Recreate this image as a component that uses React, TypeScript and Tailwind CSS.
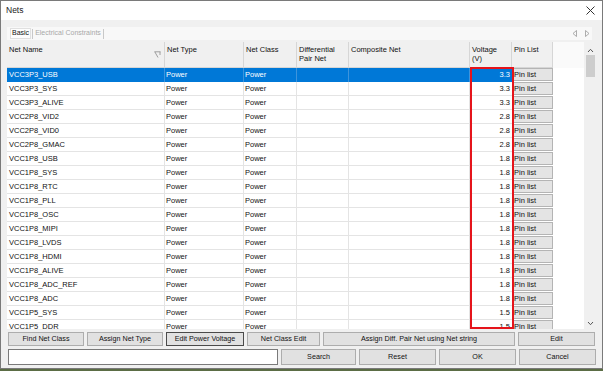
import React from "react";

const rows: [string, string][] = [
  ["VCC3P3_USB", "3.3"],
  ["VCC3P3_SYS", "3.3"],
  ["VCC3P3_ALIVE", "3.3"],
  ["VCC2P8_VID2", "2.8"],
  ["VCC2P8_VID0", "2.8"],
  ["VCC2P8_GMAC", "2.8"],
  ["VCC1P8_USB", "1.8"],
  ["VCC1P8_SYS", "1.8"],
  ["VCC1P8_RTC", "1.8"],
  ["VCC1P8_PLL", "1.8"],
  ["VCC1P8_OSC", "1.8"],
  ["VCC1P8_MIPI", "1.8"],
  ["VCC1P8_LVDS", "1.8"],
  ["VCC1P8_HDMI", "1.8"],
  ["VCC1P8_ALIVE", "1.8"],
  ["VCC1P8_ADC_REF", "1.8"],
  ["VCC1P8_ADC", "1.8"],
  ["VCC1P5_SYS", "1.5"],
  ["VCC1P5_DDR", "1.5"],
];

function Btn({ label, w, h, focus }: { label: string; w: string; h: string; focus?: boolean }) {
  return (
    <div
      className={`${w} ${h} flex items-center justify-center bg-[#e1e1e1] border ${
        focus ? "border-[#4a4a4a]" : "border-[#adadad]"
      } text-[7.2px] text-[#111]`}
    >
      {label}
    </div>
  );
}

export default function App() {
  return (
    <div className="w-[603px] h-[371px] bg-[#5b6d45] [font-family:'Liberation_Sans',Arial,sans-serif] overflow-hidden">
      <div className="w-[603px] h-[369px] border border-[#7a7a7a] bg-[#f0f0f0] flex flex-col relative">
        {/* title bar */}
        <div className="h-[19px] bg-white flex items-center justify-between pl-[5px] pr-[7px] shrink-0">
          <span className="text-[8.5px] text-[#222]">Nets</span>
          <svg width="9" height="9" viewBox="0 0 9 9">
            <path d="M0.5 0.5 L8.5 8.5 M8.5 0.5 L0.5 8.5" stroke="#333" strokeWidth="1" />
          </svg>
        </div>

        {/* tab strip */}
        <div className="mt-[7px] ml-[6px] mr-[10px] h-[13px] bg-[#f8f8f8] flex items-center text-[7px] shrink-0">
          <div className="ml-[3px] h-[11px] px-[1px] flex items-center bg-[#fdfdfd] border border-[#e0e0e0] text-[#111]">Basic</div>
          <div className="w-px h-[10px] bg-[#c8c8c8] ml-[1px]" />
          <div className="px-[2px] text-[#a8a8a8]">Electrical Constraints</div>
          <div className="w-px h-[10px] bg-[#c8c8c8]" />
          <div className="flex-1" />
          <svg width="6" height="7" viewBox="0 0 6 7" className="mr-[6px]">
            <path d="M4.5 0.5 L1 3.5 L4.5 6.5 Z" fill="none" stroke="#999" strokeWidth="0.8" />
          </svg>
          <svg width="6" height="7" viewBox="0 0 6 7" className="mr-[2px]">
            <path d="M1.5 0.5 L5 3.5 L1.5 6.5 Z" fill="none" stroke="#999" strokeWidth="0.8" />
          </svg>
        </div>

        {/* grid */}
        <div className="mt-[2px] ml-[6px] mr-[4px] h-[287px] flex shrink-0 relative">
          <div className="w-[577px] h-full bg-white overflow-hidden">
            {/* header */}
            <div className="flex h-[26px] text-[7.5px] text-[#111] leading-[9px]">
              <div className="w-[158px] bg-[#f0f0f0] border-r border-b border-[#d6d6d6] pl-[2px] pt-[3px] relative">
                Net Name
                <svg width="7" height="7" viewBox="0 0 7 7" className="absolute right-[3px] top-[9px]">
                  <path d="M0.5 0.8 L6.5 0.8 M0.8 0.8 L4 6.5 M6 0.8 L6 4" stroke="#8a8a8a" strokeWidth="0.8" fill="none" />
                </svg>
              </div>
              <div className="w-[79px] bg-[#f0f0f0] border-r border-b border-[#d6d6d6] pl-[2px] pt-[3px]">Net Type</div>
              <div className="w-[53px] bg-[#f0f0f0] border-r border-b border-[#d6d6d6] pl-[2px] pt-[3px]">Net Class</div>
              <div className="w-[52px] bg-[#f0f0f0] border-r border-b border-[#d6d6d6] pl-[2px] pt-[3px]">
                Differential
                <br />
                Pair Net
              </div>
              <div className="w-[121px] bg-[#f0f0f0] border-r border-b border-[#d6d6d6] pl-[2px] pt-[3px]">Composite Net</div>
              <div className="w-[42px] bg-[#f0f0f0] border-r border-b border-[#d6d6d6] pl-[2px] pt-[3px]">
                Voltage
                <br />
                (V)
              </div>
              <div className="w-[41px] bg-[#f0f0f0] border-r border-b border-[#d6d6d6] pl-[2px] pt-[3px]">Pin List</div>
              <div className="flex-1 bg-[#fafafa]" />
            </div>
            {/* rows */}
            {rows.map(([name, v], i) => {
              const sel = i === 0;
              const cell = sel
                ? "bg-[#0078d7] text-white border-r border-[#3d94dc]"
                : "text-[#111] border-r border-b border-[#e4e4e4]";
              return (
                <div key={name} className="flex h-[14px] text-[7.5px] leading-[13px]">
                  <div className={`w-[158px] pl-[2px] ${cell}`}>{name}</div>
                  <div className={`w-[79px] pl-[1px] ${cell}`}>Power</div>
                  <div className={`w-[53px] pl-[1px] ${cell}`}>Power</div>
                  <div className={`w-[52px] ${cell}`} />
                  <div className={`w-[121px] ${cell}`} />
                  <div className={`w-[42px] pr-[2px] text-right ${sel ? "bg-[#0078d7] text-white" : "text-[#111] border-b border-[#e4e4e4]"}`}>{v}</div>
                  <div className="w-[41px] h-[13px] bg-[#e4e4e4] border border-[#b4b4b4] pl-[1px] leading-[11px] text-[#111]">Pin list</div>
                </div>
              );
            })}
          </div>
          {/* scrollbar */}
          <div className="w-[13px] h-full bg-[#f0f0f0] flex flex-col items-center">
            <svg width="7" height="5" viewBox="0 0 7 5" className="mt-[6px]">
              <path d="M1 4 L3.5 1.3 L6 4" stroke="#555" strokeWidth="1" fill="none" />
            </svg>
            <div className="w-[9px] h-[22px] bg-[#cdcdcd] mt-[2px]" />
            <div className="flex-1" />
            <svg width="7" height="5" viewBox="0 0 7 5" className="mb-[3px]">
              <path d="M1 1 L3.5 3.7 L6 1" stroke="#555" strokeWidth="1" fill="none" />
            </svg>
          </div>
          {/* red annotation */}
          <div className="absolute left-[463px] top-[25px] w-[44px] h-[262px] border-2 border-[#e5141b] pointer-events-none" />
        </div>

        {/* buttons row 1 */}
        <div className="mt-[3px] ml-[7px] flex gap-[3px] shrink-0">
          <Btn label="Find Net Class" w="w-[76px]" h="h-[14px]" />
          <Btn label="Assign Net Type" w="w-[76px]" h="h-[14px]" />
          <Btn label="Edit Power Voltage" w="w-[78px]" h="h-[14px]" focus />
          <Btn label="Net Class Edit" w="w-[73px]" h="h-[14px]" />
          <Btn label="Assign Diff. Pair Net using Net string" w="w-[192px]" h="h-[14px]" />
          <Btn label="Edit" w="w-[77px]" h="h-[14px]" />
        </div>
        {/* buttons row 2 */}
        <div className="mt-[3px] ml-[7px] flex gap-[3px] shrink-0">
          <div className="w-[270px] h-[16px] bg-white border border-[#7a7a7a]" />
          <Btn label="Search" w="w-[75px]" h="h-[16px]" />
          <Btn label="Reset" w="w-[77px]" h="h-[16px]" />
          <Btn label="OK" w="w-[77px]" h="h-[16px]" />
          <Btn label="Cancel" w="w-[77px]" h="h-[16px]" />
        </div>
      </div>
    </div>
  );
}
